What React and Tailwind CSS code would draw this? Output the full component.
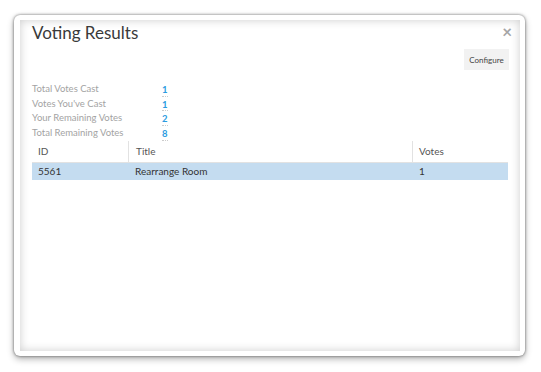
import React from "react";

const stats = [
  { label: "Total Votes Cast", value: "1" },
  { label: "Votes You've Cast", value: "1" },
  { label: "Your Remaining Votes", value: "2" },
  { label: "Total Remaining Votes", value: "8" },
];

const rows = [{ id: "5561", title: "Rearrange Room", votes: "1" }];

export default function App() {
  return (
    <div className="w-[541px] h-[372px] bg-white pl-[14px] pt-[15px] font-['Lato',sans-serif]">
      {/* Dialog frame */}
      <div className="w-[511px] h-[341px] bg-white rounded-[6px] p-[5px] pl-[6px] flex shadow-[0_0_3px_rgba(0,0,0,0.55),0_3px_7px_rgba(0,0,0,0.3)]">
        <div className="relative flex-1 bg-white shadow-[inset_0_0_10px_rgba(0,0,0,0.2)] px-[12px] pt-[1px]">
          <div className="text-[17px] leading-[24px] text-[#3a3a3a]">Voting Results</div>
          <button className="absolute right-[8px] top-[3px] text-[17px] leading-none font-bold text-[#a5a5a5]">
            ×
          </button>

          {/* Toolbar */}
          <div className="flex justify-end mt-[4px] -mr-[1px]">
            <button className="w-[45px] h-[21px] bg-[#f2f2f2] text-[8px] text-[#444]">
              Configure
            </button>
          </div>

          {/* Stats */}
          <div className="mt-[12px] text-[9.5px] leading-[14.7px]">
            {stats.map((s) => (
              <div key={s.label} className="flex">
                <div className="w-[130px] text-[#a3a3a3]">{s.label}</div>
                <div className="text-[#2a9be0] font-bold border-b border-dotted border-[#ccc] leading-[13px] mt-[1px] h-[13.7px]">
                  {s.value}
                </div>
              </div>
            ))}
          </div>

          {/* Table */}
          <div className="mt-0 w-[476px] text-[10px]">
            <div className="flex h-[22px] items-center text-[#555] border-b border-[#e2e2e2]">
              <div className="w-[96px] pl-[6px]">ID</div>
              <div className="w-[284px] h-full flex items-center pl-[7px] border-l border-[#e2e2e2]">
                Title
              </div>
              <div className="flex-1 h-full flex items-center pl-[6px] border-l border-[#e2e2e2]">
                Votes
              </div>
            </div>
            {rows.map((r) => (
              <div key={r.id} className="flex h-[17px] items-center bg-[#c4dcf0] text-[#333]">
                <div className="w-[96px] pl-[6px]">{r.id}</div>
                <div className="w-[284px] pl-[7px]">{r.title}</div>
                <div className="flex-1 pl-[7px]">{r.votes}</div>
              </div>
            ))}
          </div>
        </div>
      </div>
    </div>
  );
}
